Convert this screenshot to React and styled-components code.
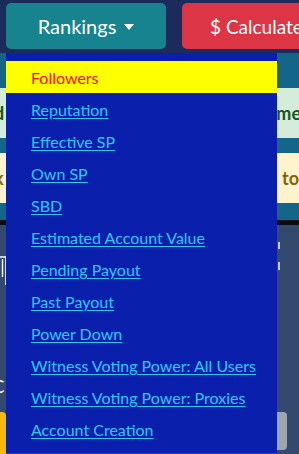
import React from 'react';
import styled, { createGlobalStyle } from 'styled-components';

const rankings = [
  'Followers',
  'Reputation',
  'Effective SP',
  'Own SP',
  'SBD',
  'Estimated Account Value',
  'Pending Payout',
  'Past Payout',
  'Power Down',
  'Witness Voting Power: All Users',
  'Witness Voting Power: Proxies',
  'Account Creation',
];

const Global = createGlobalStyle`
  html, body {
    margin: 0;
    padding: 0;
    background: #34496e;
    font-family: Lato, "Noto Sans", sans-serif;
    overflow: hidden;
  }
`;

const S = {
  Page: styled.div`
    position: relative;
    width: 299px;
    height: 454px;
    overflow: hidden;
  `,
  Header: styled.div`
    display: flex;
    gap: 16px;
    padding: 3px 0 4px 6px;
    background: #1a2b5c;
  `,
  Button: styled.button`
    flex: none;
    width: ${(p) => p.$width}px;
    height: 46px;
    border: none;
    border-radius: 5px;
    background: ${(p) => p.$bg};
    color: #fff;
    font-family: Lato, "Noto Sans", sans-serif;
    font-size: ${(p) => (p.$left ? 19 : 20)}px;
    display: flex;
    align-items: center;
    justify-content: ${(p) => (p.$left ? 'flex-start' : 'center')};
    padding: 0 0 0 ${(p) => (p.$left ? 28 : 0)}px;
    white-space: nowrap;
  `,
  Caret: styled.span`
    display: inline-block;
    margin-left: 8px;
    margin-top: 2px;
    border-left: 5px solid transparent;
    border-right: 5px solid transparent;
    border-top: 6px solid #fff;
  `,
  Band: styled.div`
    display: flex;
    flex-direction: column;
    gap: 15px;
    padding: 35px 0 17px;
    background: #136688;
    border-bottom: 5px solid #0b0b14;
  `,
  Alert: styled.div`
    height: 50px;
    display: flex;
    align-items: center;
    justify-content: space-between;
    background: ${(p) => p.$bg};
    color: ${(p) => p.$color};
    font-weight: 700;
    font-size: 18px;
    overflow: hidden;
    white-space: nowrap;
  `,
  EdgeLeft: styled.span`
    margin-left: -6px;
  `,
  EdgeRight: styled.span`
    margin-right: ${(p) => p.$shift}px;
  `,
  Lower: styled.div`
    position: relative;
    height: 240px;
  `,
  Yellow: styled.div`
    position: absolute;
    left: -20px;
    top: 187px;
    width: 26px;
    height: 60px;
    background: #f5b80b;
    border-radius: 4px;
  `,
  Grey: styled.div`
    position: absolute;
    left: 260px;
    top: 187px;
    width: 27px;
    height: 38px;
    background: #9ea5ad;
    border-radius: 4px;
  `,
  LetterC: styled.span`
    position: absolute;
    left: -7px;
    top: 151px;
    color: #fff;
    font-size: 17px;
  `,
  Menu: styled.div`
    position: absolute;
    top: 53px;
    left: 6px;
    width: 271px;
    padding: 8px 0;
    background: #0b1fad;
  `,
  Item: styled.a`
    display: block;
    height: 32px;
    line-height: 33px;
    padding-left: 25px;
    font-size: 16px;
    color: ${(p) => (p.$active ? '#f20c0c' : '#2fc8ff')};
    background: ${(p) => (p.$active ? '#ffff00' : 'transparent')};
    text-decoration: ${(p) => (p.$active ? 'none' : 'underline')};
    text-underline-offset: 2px;
    white-space: nowrap;
  `,
};

const Glyph = () => (
  <svg
    width="10"
    height="44"
    viewBox="0 0 10 44"
    style={{ position: 'absolute', left: 0, top: 22 }}
  >
    <path d="M0 10 H6 V38" stroke="#fff" strokeWidth="1.6" fill="none" />
    <path d="M2.5 12 V30" stroke="#fff" strokeWidth="1.4" fill="none" />
  </svg>
);

const RightMarks = () => (
  <svg
    width="6"
    height="32"
    viewBox="0 0 6 32"
    style={{ position: 'absolute', left: 277, top: 16 }}
  >
    <path d="M2 1 V8" stroke="#fff" strokeWidth="1.4" />
    <path d="M2 21 V29" stroke="#fff" strokeWidth="1.4" />
  </svg>
);

const App = () => (
  <S.Page>
    <Global />
    <S.Header>
      <S.Button $bg="#17838f" $width={160}>
        Rankings
        <S.Caret />
      </S.Button>
      <S.Button $bg="#dc3545" $width={160} $left>
        $ Calculate
      </S.Button>
    </S.Header>
    <S.Band>
      <S.Alert $bg="#d4edda" $color="#155724">
        <S.EdgeLeft>d</S.EdgeLeft>
        <S.EdgeRight $shift={-2}>me</S.EdgeRight>
      </S.Alert>
      <S.Alert $bg="#fff3cd" $color="#856404">
        <S.EdgeLeft>k</S.EdgeLeft>
        <S.EdgeRight $shift={0}>to</S.EdgeRight>
      </S.Alert>
    </S.Band>
    <S.Lower>
      <Glyph />
      <RightMarks />
      <S.LetterC>C</S.LetterC>
      <S.Yellow />
      <S.Grey />
    </S.Lower>
    <S.Menu>
      {rankings.map((r, i) => (
        <S.Item key={r} href="#" $active={i === 0}>
          {r}
        </S.Item>
      ))}
    </S.Menu>
  </S.Page>
);

export default App;
